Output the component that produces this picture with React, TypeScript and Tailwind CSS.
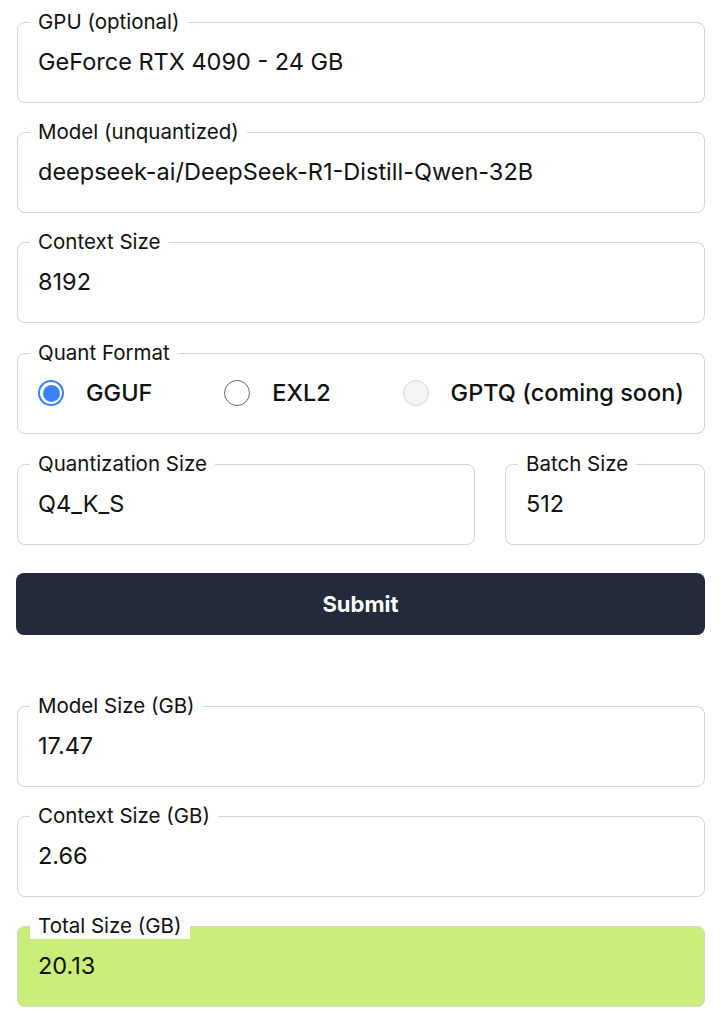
const font = { fontFamily: 'Inter, "Liberation Sans", sans-serif' }

function Field({
  label,
  value,
  className = '',
  highlight = false,
}: {
  label: string
  value: string
  className?: string
  highlight?: boolean
}) {
  return (
    <fieldset
      className={
        'rounded-lg border border-[#d4d4d8] px-3 pb-[26px] ' +
        (highlight ? 'bg-[#cbee7a] ' : 'bg-white ') +
        className
      }
    >
      <legend className="bg-white px-2 text-[20.5px] leading-[26px] text-[#111]">
        {label}
      </legend>
      <div className="px-2 pt-[13px] text-[23.5px] leading-[28px] text-[#111]">
        {value}
      </div>
    </fieldset>
  )
}

function Radio({
  label,
  checked = false,
  disabled = false,
}: {
  label: string
  checked?: boolean
  disabled?: boolean
}) {
  return (
    <label className="flex items-center gap-[22px]">
      {checked ? (
        <span className="flex h-[26px] w-[26px] items-center justify-center rounded-full border-2 border-[#3b82f6] bg-white">
          <span className="h-[17px] w-[17px] rounded-full bg-[#3b82f6]" />
        </span>
      ) : disabled ? (
        <span className="h-[26px] w-[26px] rounded-full border border-[#d4d4d8] bg-[#f4f4f5]" />
      ) : (
        <span className="h-[26px] w-[26px] rounded-full border-[1.5px] border-[#6b6b6b] bg-white" />
      )}
      <span className="text-[23.5px] font-medium leading-[28px] text-[#111]">{label}</span>
    </label>
  )
}

export default function App() {
  return (
    <div className="min-h-[1024px] bg-white pl-[17px] pr-[15px] pt-[9px]" style={font}>
      <div className="flex flex-col gap-[16px]">
        <Field label="GPU (optional)" value="GeForce RTX 4090 - 24 GB" />
        <Field label="Model (unquantized)" value="deepseek-ai/DeepSeek-R1-Distill-Qwen-32B" />
        <Field label="Context Size" value="8192" />
        <fieldset className="mt-px rounded-lg border border-[#d4d4d8] px-3 pb-[26px]">
          <legend className="bg-white px-2 text-[20.5px] leading-[26px] text-[#111]">
            Quant Format
          </legend>
          <div className="flex items-center justify-between px-2 pt-[13px]">
            <Radio label="GGUF" checked />
            <Radio label="EXL2" />
            <Radio label="GPTQ (coming soon)" disabled />
          </div>
        </fieldset>
        <div className="mt-px flex gap-[30px]">
          <Field label="Quantization Size" value="Q4_K_S" className="flex-1" />
          <Field label="Batch Size" value="512" className="w-[200px]" />
        </div>
      </div>
      <button className="mt-[28px] flex h-[62px] w-[689px] -ml-px items-center justify-center rounded-lg bg-[#222a3b] text-[22px] font-bold text-white">
        Submit
      </button>
      <div className="mt-[58px] flex flex-col gap-[16px]">
        <Field label="Model Size (GB)" value="17.47" />
        <Field label="Context Size (GB)" value="2.66" />
        <Field label="Total Size (GB)" value="20.13" highlight />
      </div>
    </div>
  )
}
